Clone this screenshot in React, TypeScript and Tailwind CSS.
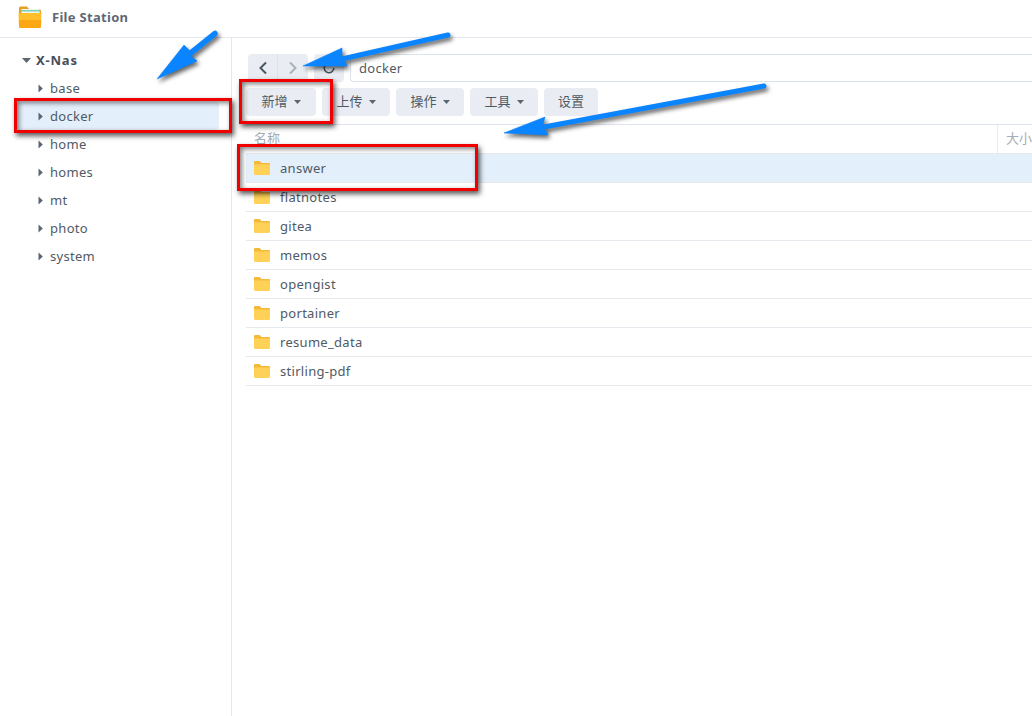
import React from "react";

const font = { fontFamily: '"Noto Sans", "Noto Sans CJK SC", sans-serif' };

function Caret({ className = "" }: { className?: string }) {
  return (
    <svg width="5" height="9" viewBox="0 0 5 9" className={className}>
      <path d="M0.5 0.5 L4.8 4.5 L0.5 8.5 Z" fill="#5b6670" />
    </svg>
  );
}

function Down() {
  return (
    <svg width="7" height="4" viewBox="0 0 7 4" className="ml-[6px]">
      <path d="M0 0 L7 0 L3.5 4 Z" fill="#5b6670" />
    </svg>
  );
}

function Folder() {
  return (
    <svg width="16" height="14" viewBox="0 0 16 14" className="shrink-0">
      <path d="M0 1.2 C0 .5 .5 0 1.2 0 L5.6 0 L7.6 2 L14.8 2 C15.5 2 16 2.5 16 3.2 L16 5 L0 5 Z" fill="#f5b93a" />
      <path d="M0 3.6 L16 3.6 L16 12.8 C16 13.5 15.5 14 14.8 14 L1.2 14 C.5 14 0 13.5 0 12.8 Z" fill="#ffd257" />
    </svg>
  );
}

function AppIcon() {
  return (
    <svg width="24" height="24" viewBox="0 0 24 24">
      <path d="M1 3 C1 2 2 1.5 3 1.5 L9 1.5 L11 4 L21 4 C22 4 23 5 23 6 L23 10 L1 10 Z" fill="#e8a020" />
      <rect x="3.5" y="4" width="18" height="5" fill="#eef6ee" />
      <rect x="3.5" y="5.2" width="18" height="1.2" fill="#5cc8a8" />
      <path d="M0.5 8 L23.5 8 L23 21.5 C23 22.5 22 23 21 23 L3 23 C2 23 1 22.5 1 21.5 Z" fill="#ffbe2a" />
      <path d="M0.9 15 L23.2 15 L23 21.5 C23 22.5 22 23 21 23 L3 23 C2 23 1 22.5 1 21.5 Z" fill="#fba814" />
    </svg>
  );
}

const tree = ["base", "docker", "home", "homes", "mt", "photo", "system"];
const files = ["answer", "flatnotes", "gitea", "memos", "opengist", "portainer", "resume_data", "stirling-pdf"];
const tools = [
  { t: "新增", w: "w-[70px]", d: true },
  { t: "上传", w: "w-[68px]", d: true },
  { t: "操作", w: "w-[68px]", d: true },
  { t: "工具", w: "w-[68px]", d: true },
  { t: "设置", w: "w-[54px]", d: false },
];

function Arrow({ line, head, w }: { line: string; head: string; w: number }) {
  return (
    <g>
      <path d={line} fill="none" stroke="#0a84ff" strokeWidth={w} strokeLinecap="round" />
      <path d={head} fill="#0a84ff" stroke="#0a84ff" strokeWidth="0.6" strokeLinejoin="round" />
    </g>
  );
}

const box = "absolute border-[3px] border-[#f00000] shadow-[2px_3px_5px_rgba(0,0,0,0.65),inset_2px_2px_5px_rgba(0,0,0,0.5)]";

export default function App() {
  return (
    <div style={font} className="relative w-[1032px] h-[716px] overflow-hidden bg-white text-[13px] text-[#505a64] tracking-[0.3px]">
      <header className="h-[38px] border-b border-[#e3e8ee] flex items-center pl-[18px] pb-[3px]">
        <AppIcon />
        <span className="ml-[10px] pt-[2px] font-bold text-[#5e6873] text-[13px]">File Station</span>
      </header>
      <div className="flex h-[678px]">
        <aside className="w-[232px] shrink-0 border-r border-[#e3e8ee] pt-[8px] pl-[17px] pr-[12px]">
          <div className="h-[28px] flex items-center pl-[5px] font-bold text-[#47505a] tracking-[0.8px]">
            <svg width="9" height="5" viewBox="0 0 9 5"><path d="M0 0 L9 0 L4.5 5 Z" fill="#5b6670" /></svg>
            <span className="ml-[5px] pt-[2px]">X-Nas</span>
          </div>
          {tree.map((n) => (
            <div key={n} className={`h-[28px] flex items-center pl-[21px] rounded-[3px] ${n === "docker" ? "bg-[#e3effb]" : ""}`}>
              <Caret />
              <span className="ml-[7px] pt-[2px]">{n}</span>
            </div>
          ))}
        </aside>
        <main className="flex-1 min-w-0 pl-[14px] pt-[16px]">
          <div className="flex h-[28px] pl-[2px]">
            <div className="w-[60px] flex rounded-[4px] bg-[#e9edf3]">
              <div className="w-[30px] flex items-center justify-center border-r border-[#dde2e9]">
                <svg width="10" height="14" viewBox="0 0 10 14"><path d="M8 1.5 L2.5 7 L8 12.5" fill="none" stroke="#4c5661" strokeWidth="2" /></svg>
              </div>
              <div className="w-[30px] flex items-center justify-center">
                <svg width="10" height="14" viewBox="0 0 10 14"><path d="M2 1.5 L7.5 7 L2 12.5" fill="none" stroke="#a9b1ba" strokeWidth="2" /></svg>
              </div>
            </div>
            <div className="ml-[6px] w-[30px] rounded-[4px] bg-[#e9edf3] flex items-center justify-center">
              <svg width="14" height="14" viewBox="0 0 14 14"><path d="M11.8 7 A4.8 4.8 0 1 1 9.5 2.9" fill="none" stroke="#4c5661" strokeWidth="1.6" /></svg>
            </div>
            <div className="ml-[6px] flex-1 border border-[#dde3ea] border-r-0 rounded-l-[4px] flex items-center pl-[8px] pt-[2px]">docker</div>
          </div>
          <div className="flex gap-[6px] mt-[6px] pb-[8px] border-b border-[#dde3ea] text-[#505a64] tracking-normal">
            {tools.map((b) => (
              <div key={b.t} className={`${b.w} h-[28px] rounded-[4px] bg-[#e9edf3] flex items-center justify-center`}>
                {b.t}
                {b.d && <Down />}
              </div>
            ))}
          </div>
          <div className="h-[29px] flex items-center border-b border-[#e6eaef] text-[#a5acb4] tracking-normal">
            <span className="ml-[8px] flex-1">名称</span>
            <div className="w-[35px] h-full border-l border-[#e6eaef] flex items-center pl-[8px] whitespace-nowrap overflow-hidden">大小</div>
          </div>
          {files.map((f) => (
            <div key={f} className={`h-[29px] flex items-center pl-[8px] border-b border-[#e6eaef] ${f === "answer" ? "bg-[#e3effb]" : ""}`}>
              <Folder />
              <span className="ml-[10px] pt-[2px]">{f}</span>
            </div>
          ))}
        </main>
      </div>

      <div className={`${box} left-[14px] top-[98px] w-[218px] h-[35px]`} />
      <div className={`${box} left-[239px] top-[79px] w-[94px] h-[45px]`} />
      <div className={`${box} left-[237px] top-[144px] w-[241px] h-[47px]`} />

      <svg width="1032" height="716" viewBox="0 0 1032 716" className="absolute left-0 top-0 pointer-events-none drop-shadow-[2px_3px_2px_rgba(0,0,0,0.6)]">
        <Arrow line="M215 33.5 L187 56" w={5.5} head="M157 79 L184 45 L189 50 L191 56 L197 61 Z" />
        <Arrow line="M448 35 L342 59" w={5} head="M303 66 L342 48 L342 56 L347 66 Z" />
        <Arrow line="M764 86 L544 127" w={5} head="M504 133 L545 117 L543 125 L548 135 Z" />
      </svg>
    </div>
  );
}
